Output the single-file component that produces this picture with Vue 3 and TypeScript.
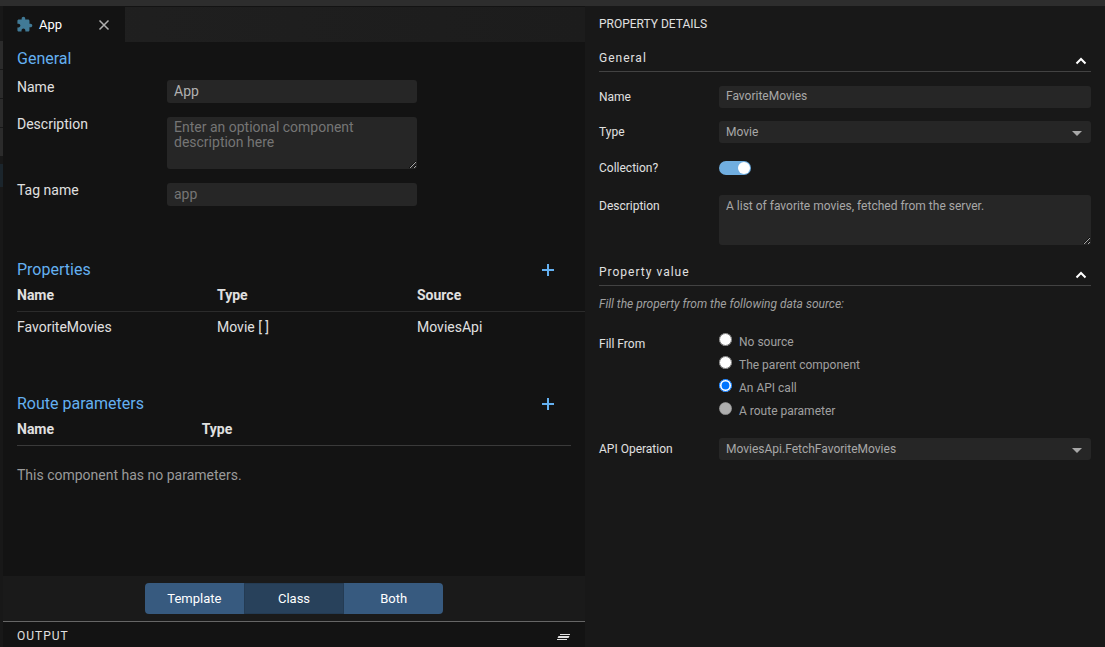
<script setup lang="ts">
import { ref } from 'vue'

interface Property {
  name: string
  type: string
  source: string
}

interface FillSource {
  value: string
  label: string
  disabled?: boolean
}

const name = ref('App')
const description = ref('')
const tagName = ref('')

const properties: Property[] = [
  { name: 'FavoriteMovies', type: 'Movie [ ]', source: 'MoviesApi' },
]

const views = ['Template', 'Class', 'Both']
const activeView = ref('Class')

const propertyName = ref('FavoriteMovies')
const propertyType = ref('Movie')
const isCollection = ref(true)
const propertyDescription = ref('A list of favorite movies, fetched from the server.')

const fillSources: FillSource[] = [
  { value: 'none', label: 'No source' },
  { value: 'parent', label: 'The parent component' },
  { value: 'api', label: 'An API call' },
  { value: 'route', label: 'A route parameter', disabled: true },
]
const fillFrom = ref('api')
const apiOperation = ref('MoviesApi.FetchFavoriteMovies')
</script>

<template>
  <div class="shell">
    <div class="topbar"></div>
    <div class="body">
      <div class="rail">
        <div class="rail-head"></div>
        <div v-for="n in 4" :key="n" class="rail-item"></div>
        <div class="rail-active"></div>
      </div>

      <main class="editor">
        <div class="tabs">
          <div class="tab">
            <svg class="tab-icon" viewBox="0 0 24 24" aria-hidden="true">
              <path d="M20.5 11H19V7c0-1.1-.9-2-2-2h-4V3.5C13 2.12 11.88 1 10.5 1S8 2.12 8 3.5V5H4c-1.1 0-1.99.9-1.99 2v3.8H3.5c1.49 0 2.7 1.21 2.7 2.7s-1.21 2.7-2.7 2.7H2V20c0 1.1.9 2 2 2h3.8v-1.5c0-1.49 1.21-2.7 2.7-2.7s2.7 1.21 2.7 2.7V22H17c1.1 0 2-.9 2-2v-4h1.5c1.38 0 2.5-1.12 2.5-2.5S21.88 11 20.5 11z" />
            </svg>
            <span class="tab-title">App</span>
            <button class="icon-button" type="button" aria-label="Close tab">
              <svg class="close-icon" viewBox="0 0 12 12" aria-hidden="true">
                <path d="M1.5 1.5l9 9M10.5 1.5l-9 9" />
              </svg>
            </button>
          </div>
        </div>

        <div class="content">
          <section class="general">
            <h2>General</h2>
            <div class="field">
              <label for="name">Name</label>
              <input id="name" v-model="name" type="text" />
            </div>
            <div class="field">
              <label for="description">Description</label>
              <textarea
                id="description"
                v-model="description"
                placeholder="Enter an optional component description here"
              ></textarea>
            </div>
            <div class="field">
              <label for="tag">Tag name</label>
              <input id="tag" v-model="tagName" type="text" placeholder="app" />
            </div>
          </section>

          <section class="properties">
            <div class="section-head">
              <h2>Properties</h2>
              <button class="icon-button" type="button" aria-label="Add property">
                <svg class="plus-icon" viewBox="0 0 12 12" aria-hidden="true"><path d="M6 0v12M0 6h12" /></svg>
              </button>
            </div>
            <table>
              <thead>
                <tr><th class="wide">Name</th><th class="wide">Type</th><th>Source</th></tr>
              </thead>
              <tbody>
                <tr v-for="p in properties" :key="p.name">
                  <td>{{ p.name }}</td>
                  <td>{{ p.type }}</td>
                  <td>{{ p.source }}</td>
                </tr>
              </tbody>
            </table>
          </section>

          <section class="routes">
            <div class="section-head">
              <h2>Route parameters</h2>
              <button class="icon-button" type="button" aria-label="Add route parameter">
                <svg class="plus-icon" viewBox="0 0 12 12" aria-hidden="true"><path d="M6 0v12M0 6h12" /></svg>
              </button>
            </div>
            <table class="route-table">
              <thead>
                <tr><th>Name</th><th>Type</th><td></td></tr>
              </thead>
            </table>
            <p class="empty">This component has no parameters.</p>
          </section>
        </div>

        <div class="view-bar">
          <div class="segmented">
            <button
              v-for="view in views"
              :key="view"
              type="button"
              :class="{ active: view === activeView }"
              :aria-pressed="view === activeView"
              @click="activeView = view"
            >{{ view }}</button>
          </div>
        </div>

        <div class="output">
          <span class="output-title">OUTPUT</span>
          <button class="icon-button" type="button" aria-label="Clear output">
            <svg class="clear-icon" viewBox="0 0 14 9" aria-hidden="true">
              <path d="M4 3h10v1H4zM2.5 5h11l-1 2h-11zM1 8h10v1H1z" />
            </svg>
          </button>
        </div>
      </main>

      <aside class="details">
        <h1>PROPERTY DETAILS</h1>

        <section>
          <div class="group-head">
            <h3>General</h3>
            <button class="icon-button" type="button" aria-label="Collapse General">
              <svg class="chevron" viewBox="0 0 12 8" aria-hidden="true"><path d="M1.5 6.5L6 2l4.5 4.5" /></svg>
            </button>
          </div>
          <div class="rows">
            <div class="row">
              <label for="p-name">Name</label>
              <input id="p-name" v-model="propertyName" type="text" />
            </div>
            <div class="row">
              <label for="p-type">Type</label>
              <div class="select">
                <select id="p-type" v-model="propertyType"><option>Movie</option></select>
                <svg class="caret" viewBox="0 0 10 5" aria-hidden="true"><path d="M0 0h10L5 5z" /></svg>
              </div>
            </div>
            <div class="row toggle-row">
              <label for="p-collection">Collection?</label>
              <input id="p-collection" v-model="isCollection" class="toggle" type="checkbox" role="switch" />
            </div>
            <div class="row">
              <label for="p-description">Description</label>
              <textarea id="p-description" v-model="propertyDescription"></textarea>
            </div>
          </div>
        </section>

        <section class="value-section">
          <div class="group-head">
            <h3>Property value</h3>
            <button class="icon-button" type="button" aria-label="Collapse Property value">
              <svg class="chevron" viewBox="0 0 12 8" aria-hidden="true"><path d="M1.5 6.5L6 2l4.5 4.5" /></svg>
            </button>
          </div>
          <p class="hint">Fill the property from the following data source:</p>
          <div class="row fill-row" role="radiogroup" aria-labelledby="fill-label">
            <span id="fill-label">Fill From</span>
            <div class="radios">
              <label v-for="s in fillSources" :key="s.value" class="radio">
                <input v-model="fillFrom" type="radio" name="fill-from" :value="s.value" :disabled="s.disabled" />
                <span>{{ s.label }}</span>
              </label>
            </div>
          </div>
          <div class="row">
            <label for="p-operation">API Operation</label>
            <div class="select">
              <select id="p-operation" v-model="apiOperation"><option>MoviesApi.FetchFavoriteMovies</option></select>
              <svg class="caret" viewBox="0 0 10 5" aria-hidden="true"><path d="M0 0h10L5 5z" /></svg>
            </div>
          </div>
        </section>
      </aside>
    </div>
  </div>
</template>

<style>
body {
  background: #181818;
}
</style>

<style scoped>
.shell {
  display: flex;
  flex-direction: column;
  min-height: 100vh;
  background: #181818;
  color: #e0e0e0;
  font: 14px/20px Roboto, "Liberation Sans", sans-serif;
}
.shell *,
.shell {
  box-sizing: border-box;
}
.topbar {
  height: 6px;
  background: #2d2d2d;
}
.body {
  flex: 1;
  display: grid;
  grid-template-columns: 3px minmax(0, 582fr) minmax(0, 520fr);
}
h1, h2, h3, p {
  margin: 0;
  font-weight: 400;
}
input, select, textarea, button {
  font: inherit;
  margin: 0;
}

/* Left edge strip */
.rail-head {
  height: 35px;
}
.rail-item {
  height: 29px;
  background: #2b2b2b;
  border-bottom: 1px solid #181818;
}
.rail-active {
  height: 23px;
  margin-top: 7px;
  background: #1b252c;
}

/* Editor */
.editor {
  display: flex;
  flex-direction: column;
  background: #131313;
  border-top: 1px solid #131313;
}
.tabs {
  display: flex;
  height: 35px;
  background: linear-gradient(90deg, #202020, #1c1c1c);
}
.tab {
  display: flex;
  align-items: center;
  width: 122px;
  padding: 0 14px 0 13px;
  background: #131313;
  font-size: 13px;
}
.tab-icon {
  width: 17px;
  height: 17px;
  margin-right: 6px;
  fill: #417a96;
}
.tab-title {
  flex: 1;
  color: #fff;
}
.icon-button {
  display: flex;
  padding: 0;
  border: 0;
  background: none;
  cursor: pointer;
}
.close-icon {
  width: 12px;
  height: 12px;
  margin-right: 1px;
  fill: none;
  stroke: #b0b0b0;
  stroke-width: 1.5;
}
.content {
  flex: 1;
  padding: 7px 0 6px 14px;
}
h2 {
  font-size: 16px;
  line-height: 20px;
  color: #64b0f0;
}
.general {
  display: flex;
  flex-direction: column;
  gap: 11px;
}
.general h2 {
  margin-bottom: -3px;
}
.field {
  display: grid;
  grid-template-columns: 150px 250px;
  align-items: start;
}
.field input,
.field textarea {
  display: block;
  margin-top: 3px;
  padding: 0 7px;
  border: 0;
  border-radius: 3px;
  background: #262626;
  color: #b0b0b0;
}
.field input {
  height: 23px;
  padding-bottom: 1px;
}
.field textarea {
  height: 52px;
  padding-top: 3px;
  line-height: 15px;
}
.field ::placeholder {
  color: #757575;
}
.properties {
  margin-top: 54px;
}
.section-head {
  display: flex;
  align-items: center;
  justify-content: space-between;
  padding-right: 31px;
}
.plus-icon {
  width: 12px;
  height: 12px;
  fill: none;
  stroke: #64b0f0;
  stroke-width: 2;
}
table {
  width: 100%;
  table-layout: fixed;
  border-collapse: collapse;
}
th, td {
  padding: 5px 0 6px;
  text-align: left;
}
th {
  font-weight: 700;
}
thead tr {
  border-bottom: 1px solid #2b2b2b;
}
.wide {
  width: 200px;
}
.routes {
  margin-top: 51px;
  padding-right: 14px;
}
.routes .section-head {
  padding-right: 17px;
}
.route-table thead tr {
  border-color: #3a3a3a;
}
.empty {
  margin-top: 19px;
  color: #9a9a9a;
}
.view-bar {
  display: flex;
  justify-content: center;
  padding: 7px 0;
  background: #1a1a1a;
}
.segmented {
  display: flex;
  width: 298px;
  height: 31px;
  overflow: hidden;
  border-radius: 4px;
}
.segmented button {
  flex: 1;
  padding: 0;
  border: 0;
  background: #375a7f;
  color: #fff;
  font-size: 13px;
  cursor: pointer;
}
.segmented .active {
  background: #28415b;
  border: 1px solid #243b53;
}
.output {
  display: flex;
  align-items: center;
  justify-content: space-between;
  height: 26px;
  padding: 2px 15px 0 14px;
  border-top: 1px solid #666;
}
.output-title {
  font-size: 12px;
  letter-spacing: 1px;
}
.clear-icon {
  width: 14px;
  height: 9px;
  fill: #e0e0e0;
}

/* Property details */
.details {
  padding: 8px 14px;
  font-size: 12px;
  background: #181818;
}
h1 {
  font-size: 12px;
  line-height: 20px;
}
.group-head {
  display: flex;
  justify-content: space-between;
  align-items: center;
  height: 24px;
  margin-top: 14px;
  padding-right: 4px;
  border-bottom: 1px solid #424242;
}
.group-head h3 {
  padding-bottom: 4px;
  font-size: 12px;
  line-height: 16px;
  letter-spacing: 1px;
}
.chevron {
  width: 12px;
  height: 8px;
  margin-top: 2px;
  fill: none;
  stroke: #fff;
  stroke-width: 2;
}
.rows {
  display: flex;
  flex-direction: column;
  gap: 13px;
  margin-top: 14px;
}
.row {
  display: grid;
  grid-template-columns: 120px minmax(0, 1fr);
  align-items: start;
  line-height: 22px;
}
.row > input[type="text"],
.row textarea,
.row select {
  display: block;
  width: 100%;
  height: 22px;
  padding: 0 7px 2px;
  border: 0;
  border-radius: 3px;
  background: #262626;
  color: #a8a8a8;
}
.row textarea {
  height: 50px;
  padding-top: 4px;
  line-height: 14px;
}
.row select {
  appearance: none;
  padding-bottom: 0;
}
.select {
  position: relative;
}
.caret {
  position: absolute;
  right: 9px;
  top: 10px;
  width: 10px;
  height: 5px;
  fill: #a8a8a8;
  pointer-events: none;
}
.toggle-row {
  align-items: center;
  padding: 1px 0 3px;
}
.toggle {
  appearance: none;
  display: flex;
  justify-content: flex-start;
  align-items: center;
  width: 32px;
  height: 14px;
  padding: 0 1px;
  border-radius: 7px;
  background: #555;
}
.toggle:checked {
  justify-content: flex-end;
  background: #70aee0;
}
.toggle::before {
  content: "";
  width: 12px;
  height: 12px;
  border-radius: 50%;
  background: #fff;
}
.value-section .group-head {
  margin-top: 17px;
}
.hint {
  margin-top: 8px;
  color: #a0a0a0;
  font-style: italic;
}
.fill-row {
  margin-top: 19px;
  margin-bottom: 13px;
}
.radios {
  display: flex;
  flex-direction: column;
}
.radio {
  display: flex;
  align-items: flex-start;
  gap: 7px;
  height: 23px;
  line-height: 18px;
  color: #a0a0a0;
}
.radio input {
  width: 13px;
  height: 13px;
}
</style>
